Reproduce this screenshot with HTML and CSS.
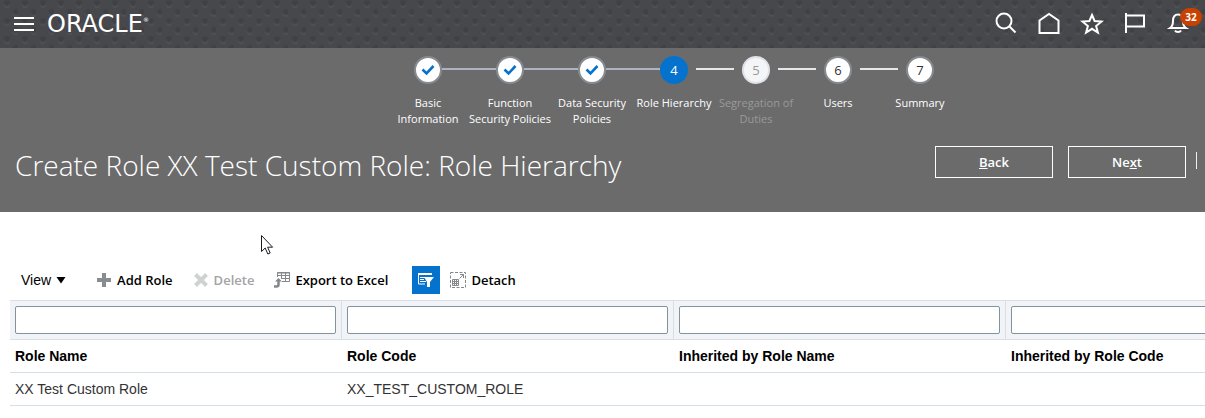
FILE: index.html
```html
<!DOCTYPE html>
<html lang="en">
<head>
  <meta charset="UTF-8">
  <meta name="viewport" content="width=device-width, initial-scale=1.0">
  <title>Create Role: Role Hierarchy</title>
  <link rel="stylesheet" href="styles.css">
</head>
<body>
  <header class="topbar">
    <button class="icon-btn menu-btn" aria-label="Navigator">
      <svg width="20" height="16" viewBox="0 0 20 16" fill="none" stroke="#fff" stroke-width="2"><path d="M0 2h20M0 8h20M0 14h20"/></svg>
    </button>
    <a class="logo" href="#">ORACLE<sup>®</sup></a>
    <nav class="top-icons">
      <button class="icon-btn" aria-label="Search">
        <svg width="24" height="24" viewBox="0 0 24 24" fill="none" stroke="#fff" stroke-width="2"><circle cx="10" cy="9" r="7.5"/><path d="M15.500 14.500l6 6"/></svg>
      </button>
      <button class="icon-btn" aria-label="Home">
        <svg width="24" height="24" viewBox="0 0 24 24" fill="none" stroke="#fff" stroke-width="2"><path d="M2.500 21V8.500L12 2l9.500 6.500V21z"/></svg>
      </button>
      <button class="icon-btn" aria-label="Favorites">
        <svg width="24" height="24" viewBox="0 0 24 24" fill="none" stroke="#fff" stroke-width="2"><path d="M12 3l2.600 6 7 .5-5.500 4.500 1.800 6.500-5.900-3.700-5.900 3.700L7.900 14 2.400 9.500l7-.5z"/></svg>
      </button>
      <button class="icon-btn" aria-label="Watchlist">
        <svg width="24" height="24" viewBox="0 0 24 24" fill="none" stroke="#fff" stroke-width="2"><path d="M3 1v20M3 3.500h18v11H3"/></svg>
      </button>
      <button class="icon-btn bell" aria-label="Notifications">
        <svg width="24" height="24" viewBox="0 0 24 24" fill="none" stroke="#fff" stroke-width="2"><path d="M4 16c3-2 3-4 3-7 0-4 1.500-6.500 5-6.500S17 5 17 9c0 3 0 5 3 7z"/><path d="M9 18.500c1 2 5 2 6 0"/></svg>
        <span class="badge">32</span>
      </button>
    </nav>
  </header>

  <section class="banner">
    <ol class="train">
      <li class="step done">
        <span class="dot"><svg width="14" height="12" viewBox="0 0 14 12" fill="none" stroke="#0572ce" stroke-width="2.600"><path d="M1.500 5.500l4 4L12.500 2"/></svg></span>
        <a class="label" href="#">Basic Information</a>
      </li>
      <li class="step done">
        <span class="dot"><svg width="14" height="12" viewBox="0 0 14 12" fill="none" stroke="#0572ce" stroke-width="2.600"><path d="M1.500 5.500l4 4L12.500 2"/></svg></span>
        <a class="label" href="#">Function<br>Security Policies</a>
      </li>
      <li class="step done">
        <span class="dot"><svg width="14" height="12" viewBox="0 0 14 12" fill="none" stroke="#0572ce" stroke-width="2.600"><path d="M1.500 5.500l4 4L12.500 2"/></svg></span>
        <a class="label" href="#">Data Security<br>Policies</a>
      </li>
      <li class="step current">
        <span class="dot">4</span>
        <a class="label" href="#">Role Hierarchy</a>
      </li>
      <li class="step disabled">
        <span class="dot">5</span>
        <span class="label">Segregation of<br>Duties</span>
      </li>
      <li class="step">
        <span class="dot">6</span>
        <a class="label" href="#">Users</a>
      </li>
      <li class="step">
        <span class="dot">7</span>
        <a class="label" href="#">Summary</a>
      </li>
    </ol>
    <div class="title-row">
      <h1>Create Role XX Test Custom Role: Role Hierarchy</h1>
      <div class="actions">
        <button class="nav-btn" accesskey="b"><u>B</u>ack</button>
        <button class="nav-btn" accesskey="x">Ne<u>x</u>t</button>
        <span class="divider"></span>
      </div>
    </div>
  </section>

  <main class="content">
    <div class="toolbar">
      <button class="view-btn">View
        <svg width="10" height="8" viewBox="0 0 10 8"><path d="M.5 1h9L5 7.500z"/></svg>
      </button>
      <button class="tool add">
        <svg width="16" height="16" viewBox="0 0 16 16" stroke="#8a8d90" stroke-width="4"><path d="M8 1v14M1 8h14"/></svg>
        Add Role
      </button>
      <button class="tool delete" disabled>
        <svg width="16" height="16" viewBox="0 0 16 16" stroke="#d0d1d2" stroke-width="4"><path d="M2.500 2.500l11 11M13.500 2.500l-11 11"/></svg>
        Delete
      </button>
      <button class="tool export">
        <svg width="16" height="16" viewBox="0 0 16 16" fill="none" stroke="#85888b"><path d="M3.500 5V.5h12v9H8M3.500 3.500h12M7 6.500h8.500M7.500 1v5M11.500 1v8.500M3 1h13"/><path d="M0 14.500h2.500q2 0 2-2V9" stroke-width="2.500"/><path d="M1 9.500L4.500 6 8 9.500z" fill="#85888b" stroke="none"/></svg>
        Export to Excel
      </button>
      <button class="filter-btn" aria-label="Query By Example">
        <svg width="18" height="16" viewBox="0 0 18 16"><path d="M1.500 1v11H8M3 5.500h5M3 7.500h4M3 9.500h6" fill="none" stroke="#fff"/><path d="M1 1h14v2H1zM7 5h10l-4 5v5h-3v-5z" fill="#fff"/></svg>
      </button>
      <button class="tool detach">
        <svg width="16" height="16" viewBox="0 0 16 16" fill="none" stroke="#85888b"><path d="M.5.5h15v15H.5z" stroke-dasharray="3 1.500"/><path d="M2.500 7.500h6v6h-6zM2.500 9.500h6M2.500 11.500h6M4.500 8v5.500M6.500 8v5.500M9.500 6.500l4-4M10 2.500h3.500V6"/></svg>
        Detach
      </button>
    </div>

    <div class="table-wrap">
      <table class="roles">
        <thead>
          <tr class="filters">
            <td><input type="text" aria-label="Filter Role Name"></td>
            <td><input type="text" aria-label="Filter Role Code"></td>
            <td><input type="text" aria-label="Filter Inherited by Role Name"></td>
            <td><input type="text" aria-label="Filter Inherited by Role Code"></td>
          </tr>
          <tr>
            <th scope="col">Role Name</th>
            <th scope="col">Role Code</th>
            <th scope="col">Inherited by Role Name</th>
            <th scope="col">Inherited by Role Code</th>
          </tr>
        </thead>
        <tbody>
          <tr>
            <td>XX Test Custom Role</td>
            <td>XX_TEST_CUSTOM_ROLE</td>
            <td></td>
            <td></td>
          </tr>
        </tbody>
      </table>
    </div>
  </main>

  <svg class="pointer" width="13" height="20" viewBox="0 0 13 20" fill="#fff" stroke="#1a1a26"><path d="M.5.5v16l3.700-3.500 2.600 6 2.400-1-2.600-5.800h5z"/></svg>
</body>
</html>
```
FILE: styles.css
```css
* {
  box-sizing: border-box;
}

body {
  margin: 0;
  background: #fff;
  color: #333;
  font-family: "Open Sans", "Noto Sans", sans-serif;
  font-size: 13px;
  overflow-x: hidden;
}

button {
  padding: 0;
  border: 0;
  background: none;
  font: inherit;
  color: inherit;
  cursor: pointer;
}

svg {
  display: block;
  flex-shrink: 0;
}

/* top bar */
.topbar {
  display: flex;
  align-items: center;
  height: 48px;
  padding: 0 15px 0 14px;
  background-color: #47484c;
  background-image:
    radial-gradient(circle at 7px 3px, #404145 2px, transparent 4px),
    radial-gradient(circle at 7px 5px, #515256 2px, transparent 4px),
    radial-gradient(circle at 16px 12px, #404145 2px, transparent 4px),
    radial-gradient(circle at 16px 14px, #515256 2px, transparent 4px);
  background-size: 18px 18px;
}

.logo {
  margin-left: 13px;
  color: #fff;
  font-family: "DejaVu Sans", sans-serif;
  font-size: 24px;
  line-height: 24px;
  text-decoration: none;
}

.logo sup {
  font-size: 6px;
  line-height: 6px;
  vertical-align: 10px;
}

.top-icons {
  display: flex;
  gap: 19px;
  margin-left: auto;
}

.bell {
  position: relative;
}

.badge {
  position: absolute;
  top: -4px;
  left: 14px;
  width: 22px;
  height: 18px;
  border-radius: 9px;
  background: #c74200;
  color: #fff;
  font-size: 10px;
  font-weight: 700;
  line-height: 18px;
  text-align: center;
}

/* train and title */
.banner {
  padding-bottom: 28px;
  background: #6b6b6b;
  color: #fff;
}

.train {
  display: flex;
  justify-content: center;
  margin: 0;
  padding: 8px 0 0 143px;
  list-style: none;
}

.step {
  display: flex;
  flex-direction: column;
  align-items: center;
  position: relative;
  width: 82px;
  height: 80px;
  font-size: 11px;
  line-height: 16px;
  text-align: center;
}

.label {
  color: #fff;
  text-decoration: none;
}

.step:not(:first-child) .label {
  white-space: nowrap;
}

.dot {
  display: flex;
  flex-shrink: 0;
  align-items: center;
  justify-content: center;
  width: 28px;
  height: 28px;
  margin-bottom: 11px;
  border: 2px solid #858b90;
  border-radius: 50%;
  background: #fff;
  color: #333;
  font-size: 13px;
}

/* connector to the next step */
.step:not(:last-child)::after {
  content: "";
  position: absolute;
  top: 12px;
  left: 63px;
  width: 38px;
  height: 2px;
  background: #e4e6ea;
}

.step.done::after {
  left: 55px;
  width: 54px;
  background: #abb4c0;
}

.current .dot {
  border-color: #0572ce;
  background: #0572ce;
  color: #fff;
}

.disabled .label {
  color: #999;
}

.disabled .dot {
  border-color: #dfe3e8;
  background: #f4f5f7;
  color: #999;
}

.title-row {
  display: flex;
  justify-content: space-between;
  padding: 10px 8px 0 15px;
}

h1 {
  margin: 0;
  font-size: 28px;
  font-weight: 300;
  line-height: 38px;
  white-space: nowrap;
}

.actions {
  display: flex;
  align-items: flex-start;
}

.nav-btn {
  width: 118px;
  height: 32px;
  margin-right: 15px;
  border: 1px solid #fff;
  font-weight: 600;
}

.nav-btn + .divider {
  width: 1px;
  height: 17px;
  margin: 6px 0 0 -5px;
  background: #f4f2e6;
}

/* table toolbar */
.content {
  padding: 54px 0 0 10px;
}

.toolbar {
  display: flex;
  align-items: center;
  height: 28px;
  margin-bottom: 6px;
  padding-left: 11px;
  color: #000;
}

.view-btn,
.tool {
  display: flex;
  align-items: center;
  gap: 5px;
}

.view-btn {
  margin-right: 30px;
  font-family: "Liberation Sans", Arial, sans-serif;
  font-size: 14px;
}

.tool {
  margin-right: 20px;
  font-weight: 600;
}

.tool:disabled {
  color: #a3a3a3;
}

.tool.export {
  margin-right: 24px;
}

.filter-btn {
  display: flex;
  align-items: center;
  justify-content: center;
  width: 28px;
  height: 28px;
  margin-right: 10px;
  background: #0572ce;
}

/* roles table */
.table-wrap {
  overflow: hidden;
}

.roles {
  width: 1328px;
  border-collapse: separate;
  border-spacing: 0;
  border-top: 1px solid #d6dfe6;
  table-layout: fixed;
  font-family: "Liberation Sans", Arial, sans-serif;
  font-size: 14px;
}

.roles th,
.roles td {
  height: 33px;
  padding: 0 5px;
  border-bottom: 1px solid #d6dfe6;
  text-align: left;
}

.roles th {
  color: #000;
}

.roles .filters td {
  height: 39px;
  border-right: 1px solid #d6dfe6;
  background: #f1f3f7;
}

.filters input {
  display: block;
  width: 100%;
  height: 28px;
  border: 1px solid #7f949f;
  border-radius: 2px;
  background: #fff;
  font: inherit;
}

.pointer {
  position: absolute;
  top: 235px;
  left: 261px;
}
```
